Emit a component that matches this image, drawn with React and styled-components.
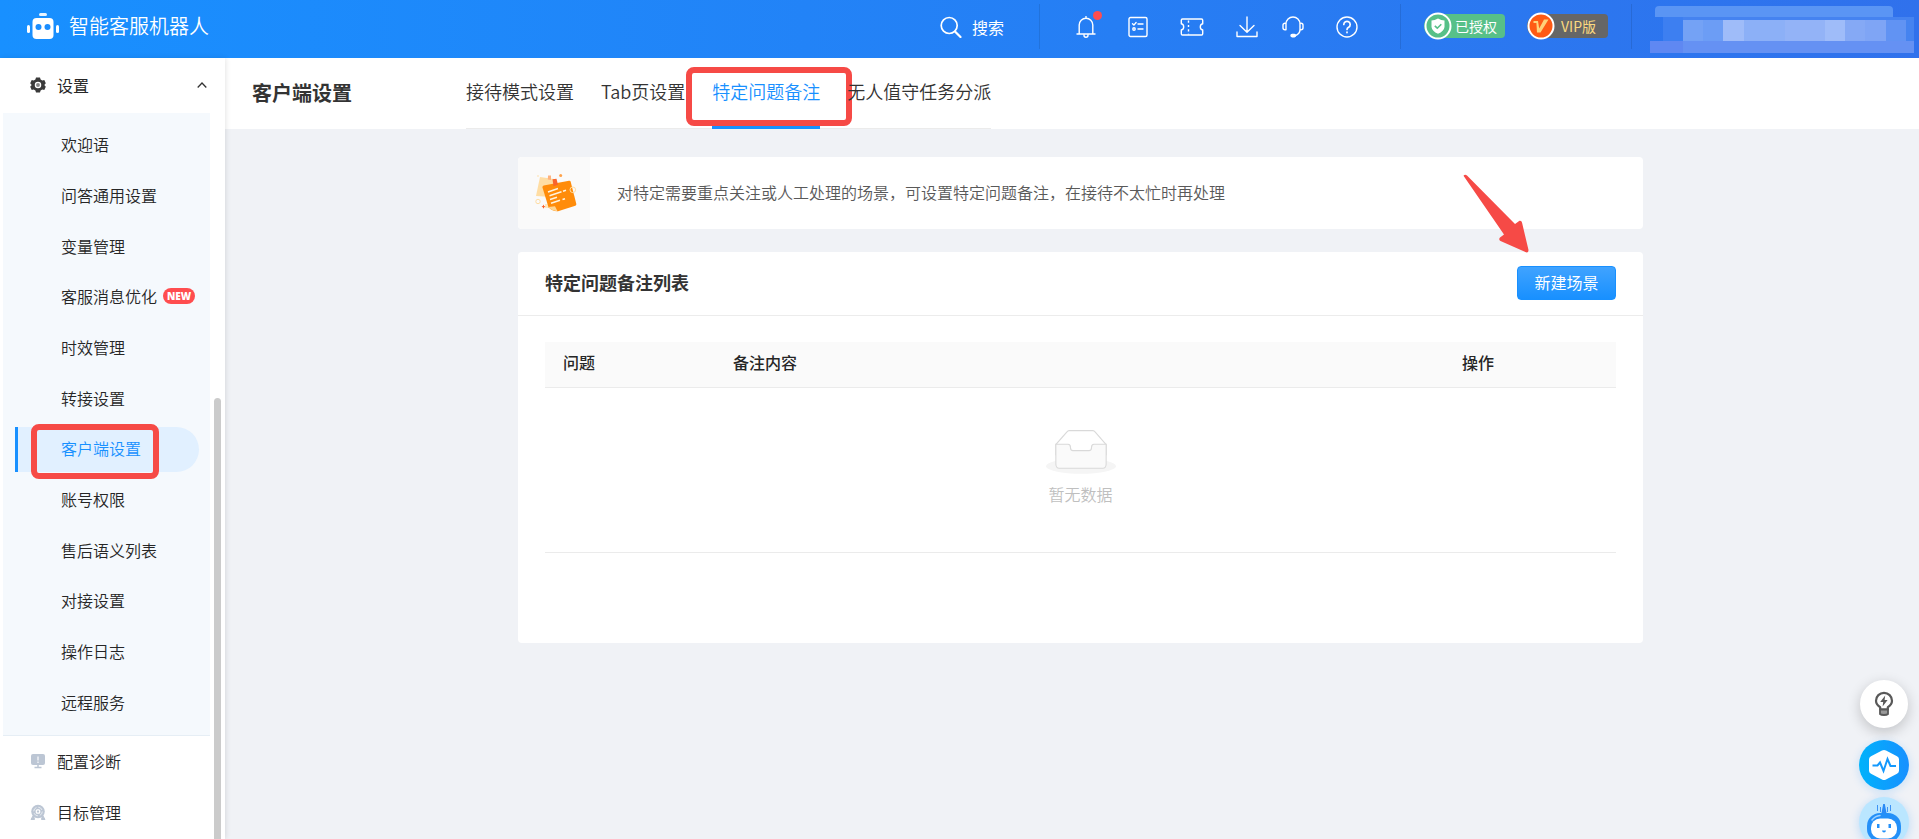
import React from 'react';
import styled, { createGlobalStyle } from 'styled-components';

const menu = [
    { label: '欢迎语' },
    { label: '问答通用设置' },
    { label: '变量管理' },
    { label: '客服消息优化', isNew: true },
    { label: '时效管理' },
    { label: '转接设置' },
    { label: '客户端设置', active: true },
    { label: '账号权限' },
    { label: '售后语义列表' },
    { label: '对接设置' },
    { label: '操作日志' },
    { label: '远程服务' },
];

const tabs = ['接待模式设置', 'Tab页设置', '特定问题备注', '无人值守任务分派'];

export default function App() {
    return (
        <PageStyle>
            <GlobalStyle />
            <Topbar />
            <BodyStyle>
                <Sidebar />
                <MainStyle>
                    <SubHeader>
                        <PageTitle>客户端设置</PageTitle>
                        <TabList>
                            {tabs.map((tab, i) => (
                                <Tab key={tab} href="#" $active={i === 2}>
                                    {tab}
                                    {i === 2 && <TabMark />}
                                </Tab>
                            ))}
                        </TabList>
                    </SubHeader>
                    <ContentStyle>
                        <Banner>
                            <BannerIcon><NoteIcon /></BannerIcon>
                            <BannerText>对特定需要重点关注或人工处理的场景，可设置特定问题备注，在接待不太忙时再处理</BannerText>
                        </Banner>
                        <Card>
                            <CardHeader>
                                <CardTitle>特定问题备注列表</CardTitle>
                                <CreateButton type="button">
                                    新建场景
                                    <Arrow viewBox="0 0 66 80" aria-hidden="true">
                                        <path d="M0.5 1.8Q2 -.2 4 1.6L52 50L56.500 46.700Q58.600 46.300 59 48.500L65.500 76Q65.600 78.800 63 78.300L37.500 67Q35.300 65.500 37 63.500L41 60.500Z" fill="#f64a46" />
                                    </Arrow>
                                </CreateButton>
                            </CardHeader>
                            <CardBody>
                                <Table>
                                    <thead>
                                        <tr>
                                            <Th $width="170px">问题</Th>
                                            <Th>备注内容</Th>
                                            <Th $width="172px">操作</Th>
                                        </tr>
                                    </thead>
                                    <tbody>
                                        <tr>
                                            <EmptyCell colSpan={3}>
                                                <EmptyIcon />
                                                <EmptyText>暂无数据</EmptyText>
                                            </EmptyCell>
                                        </tr>
                                    </tbody>
                                </Table>
                            </CardBody>
                        </Card>
                    </ContentStyle>
                </MainStyle>
            </BodyStyle>
            <FloatStyle>
                <FloatButton type="button" aria-label="建议" $size="48px" $bg="#fff" $shadow="0 4px 14px rgba(0, 0, 0, 0.2)">
                    <BulbIcon />
                </FloatButton>
                <FloatGroup>
                    <FloatButton type="button" aria-label="诊断" $size="50px" $bg="linear-gradient(90deg, #00b2fb, #1890ff)" $shadow="0 2px 10px rgba(24, 144, 255, 0.2)">
                        <PulseIcon />
                    </FloatButton>
                    <FloatButton type="button" aria-label="助手" $size="50px" $bg="#bae6ff" $shadow="0 2px 10px rgba(24, 144, 255, 0.25)">
                        <BotIcon />
                    </FloatButton>
                </FloatGroup>
            </FloatStyle>
        </PageStyle>
    );
}

function Topbar() {
    return (
        <TopbarStyle>
            <Brand href="#">
                <LogoIcon />
                智能客服机器人
            </Brand>
            <SearchButton type="button">
                <Svg width="22" height="22" viewBox="0 0 22 22" strokeWidth="1.700">
                    <circle cx="9.200" cy="9.500" r="8" />
                    <path d="M15 15.500L20.500 21" strokeWidth="2.200" />
                </Svg>
                搜索
            </SearchButton>
            <Divider />
            <IconRow>
                <IconButton type="button" aria-label="通知">
                    <Svg width="20" height="22" viewBox="0 0 20 22">
                        <path d="M1 18h18M3.200 18V9a6.800 6.800 0 0 1 13.600 0v9M10 2V.5M8 19.200a2 2 0 0 0 4 0" />
                    </Svg>
                    <Dot />
                </IconButton>
                <IconButton type="button" aria-label="清单">
                    <Svg width="20" height="22" viewBox="0 0 20 22">
                        <rect x="1" y="1.500" width="18" height="19" rx="1.500" />
                        <path d="M4.500 7.800l1.400 1.300 2.200-2.600M10 8h5M10 13h5" />
                        <circle cx="6" cy="13" r="1.200" />
                    </Svg>
                </IconButton>
                <IconButton type="button" aria-label="卡券">
                    <Svg width="24" height="22" viewBox="0 0 24 22">
                        <path d="M2.500 3h19a1.200 1.200 0 0 1 1.200 1.200v3.600a3.200 3.200 0 0 0 0 6.200v3.800a1.200 1.200 0 0 1-1.200 1.200h-19a1.200 1.200 0 0 1-1.200-1.200V14a3.200 3.200 0 0 0 0-6.200V4.200A1.200 1.200 0 0 1 2.500 3z" />
                        <path d="M8.500 4.500v14" strokeDasharray="2.200 2.200" strokeLinecap="butt" />
                    </Svg>
                </IconButton>
                <IconPair>
                    <IconButton type="button" aria-label="下载">
                        <Svg width="22" height="22" viewBox="0 0 22 22">
                            <path d="M11 1v15M4 9.500l7 6.800 7-6.800M1 16v4.500h20V16" />
                        </Svg>
                    </IconButton>
                    <IconButton type="button" aria-label="客服">
                        <Svg width="22" height="22" viewBox="0 0 22 22">
                            <path d="M4 13.500V8a7 7 0 0 1 14 0v5.500c0 3-1.500 4.800-4.500 6.200M4 7.200H3a2 2 0 0 0-2 2v2.600a2 2 0 0 0 2 2h1zM18 7.200h1a2 2 0 0 1 2 2v2.600a2 2 0 0 1-2 2h-1z" />
                            <rect x="9" y="18.500" width="4.500" height="2.200" rx="1.100" fill="#fff" />
                        </Svg>
                    </IconButton>
                </IconPair>
                <IconButton type="button" aria-label="帮助">
                    <Svg width="22" height="22" viewBox="0 0 22 22">
                        <circle cx="11" cy="11" r="10" />
                        <path d="M7.800 8.500a3.200 3.200 0 1 1 4.800 2.800c-1.100.6-1.600 1.100-1.600 2.200M11 16v.6" strokeWidth="1.700" />
                    </Svg>
                </IconButton>
            </IconRow>
            <Divider />
            <BadgeRow>
                <Badge $bg="#57c088" $color="#fff">
                    <svg width="28" height="28" viewBox="0 0 28 28">
                        <circle cx="14" cy="14" r="12.500" fill="#57c088" stroke="#fff" strokeWidth="2" />
                        <path d="M14 6.500q3.300 1.900 6.500 2v6.500q-.5 4.200-6.500 6.800q-6-2.600-6.500-6.800V8.500q3.200-.1 6.500-2z" fill="#fff" />
                        <path d="M10.800 13.800l2.500 2.400 4-4" fill="none" stroke="#57c088" strokeWidth="1.600" />
                    </svg>
                    已授权
                </Badge>
                <Badge $bg="#666" $color="#fbd97f">
                    <svg width="28" height="28" viewBox="0 0 28 28">
                        <circle cx="14" cy="14" r="12.500" fill="#ff5a14" stroke="#fff" strokeWidth="2" />
                        <path d="M6.500 9h4.500l1.200 7.500L17 7.500h4.500L13.500 20.500H10L9.400 11H6.500z" fill="#ffd27a" />
                    </svg>
                    <span>VIP版</span>
                </Badge>
            </BadgeRow>
            <Divider />
            <Mosaic width="264" height="47" viewBox="0 0 264 47">
                <path d="M5 11V4a4 4 0 0 1 4-4h230a4 4 0 0 1 4 4v7z" fill="#5a95f4" />
                <rect x="33" y="11" width="231" height="25" fill="#4583f0" />
                <rect x="0" y="35" width="264" height="12" fill="#6591f3" />
                <rect x="0" y="35" width="33" height="12" fill="#5f88f2" />
                <rect x="13" y="11" width="20" height="24" fill="#3d7ff1" />
                <rect x="33" y="14" width="20" height="21" fill="#74a2f5" />
                <rect x="53" y="14" width="20" height="21" fill="#6c9df5" />
                <rect x="73" y="14" width="21" height="21" fill="#9fbcf9" />
                <rect x="94" y="14" width="41" height="21" fill="#8cb0f7" />
                <rect x="135" y="14" width="40" height="21" fill="#93b3f7" />
                <rect x="175" y="14" width="20" height="21" fill="#9fbcf9" />
                <rect x="195" y="14" width="20" height="21" fill="#85a9f5" />
                <rect x="215" y="14" width="21" height="21" fill="#7fa5f5" />
                <rect x="236" y="14" width="20" height="21" fill="#6193f3" />
            </Mosaic>
        </TopbarStyle>
    );
}

function Sidebar() {
    return (
        <SidebarStyle>
            <GroupButton type="button">
                <svg width="16" height="16" viewBox="0 0 16 16">
                    <path d="M6 .5h4l.6 2 1.700 1 2-.6 1.500 3.300L14.300 8l1.500 1.800-1.500 3.300-2-.6-1.700 1-.6 2H6l-.6-2-1.700-1-2 .6L.2 9.800 1.700 8 .2 6.200 1.700 2.900l2 .6 1.700-1z" fill="#3a3a3a" />
                    <circle cx="8" cy="8" r="2.600" fill="#888" stroke="#fff" strokeWidth="1.300" />
                </svg>
                <GroupLabel>设置</GroupLabel>
                <svg width="10" height="6" viewBox="0 0 10 6">
                    <path d="M.7 5.500L5 1l4.300 4.500" fill="none" stroke="#333" strokeWidth="1.300" />
                </svg>
            </GroupButton>
            <SubMenu>
                {menu.map((item) => (
                    <SubMenuRow key={item.label}>
                        <MenuLink href="#" $active={item.active}>
                            {item.label}
                            {item.isNew && <NewBadge>NEW</NewBadge>}
                            {item.active && <MenuMark />}
                        </MenuLink>
                    </SubMenuRow>
                ))}
            </SubMenu>
            <RootLink href="#">
                <svg width="16" height="16" viewBox="0 0 16 16">
                    <rect x="1" y="1" width="14" height="11" rx="2" fill="#bcc6d4" />
                    <path d="M8 12v2.500M4.500 14.500h7" stroke="#bcc6d4" strokeWidth="1.500" />
                    <path d="M8 3.500v4M8 8.500v1.500" stroke="#eef1f5" strokeWidth="1.500" />
                </svg>
                配置诊断
            </RootLink>
            <RootLink href="#">
                <svg width="16" height="16" viewBox="0 0 16 16">
                    <path d="M3.500 11L1 15.500h3.500zM12.500 11l2.500 4.500h-3.500z" fill="#bcc6d4" stroke="#bcc6d4" />
                    <circle cx="8" cy="7.500" r="6.800" fill="#bcc6d4" />
                    <circle cx="8" cy="7.500" r="4.300" fill="none" stroke="#e8ecf1" strokeWidth="1" strokeDasharray="4.700 2" />
                    <rect x="6.300" y="5.800" width="3.400" height="3.400" rx="1" fill="none" stroke="#fff" strokeWidth="1.200" />
                </svg>
                目标管理
            </RootLink>
            <ScrollThumb />
        </SidebarStyle>
    );
}

function LogoIcon() {
    return (
        <svg width="32" height="26" viewBox="0 0 32 26" fill="#fff">
            <rect x="12" y="0" width="8" height="3" rx="1.500" opacity="0.9" />
            <rect x="5.500" y="5" width="21" height="21" rx="4" />
            <rect x="0" y="12" width="3" height="8" rx="1.500" />
            <rect x="29" y="12" width="3" height="8" rx="1.500" />
            <circle cx="11.500" cy="14" r="3" fill="#1a8dff" />
            <circle cx="20.500" cy="14" r="3" fill="#1a8dff" />
        </svg>
    );
}

function NoteIcon() {
    return (
        <svg width="60" height="60" viewBox="-1 3 60 60">
            <path d="M15 17l14 2-3 18-15-1z" fill="#ffdda3" />
            <path d="M23 15.500h3V20l-3.200-.5z" fill="#ffb27e" />
            <circle cx="13" cy="41.500" r="2.200" fill="none" stroke="#ffdda3" />
            <path d="M20 44h4v4h-4z" fill="#ffe7bd" />
            <path d="M17.500 27.500q-.3-1.600 1.200-2L44 20.700q1.300-.2 1.700 1L51.300 44q.3 1.300-1 1.800L33 51.200q-5.500.3-9.500-4z" fill="#ff8c0a" />
            <path d="M23.500 47l6.500-.8 2.500 5q-5.500-.2-9-4.200z" fill="#ffd592" />
            <path d="M27.500 19.300l4-.6 1.500 6-4.500 1.500z" fill="#f9642c" />
            <circle cx="35.700" cy="15.600" r="1.500" fill="#ffa24a" />
            <circle cx="13" cy="16" r="0.800" fill="#ffdda3" />
            <path d="M18.500 44.500l.7 1.500 1.300.6-1.300.7-.7 1.500-.7-1.500-1.300-.7 1.300-.6z" fill="#f9642c" />
            <path d="M23 32l10-3.500M24.500 35.700l12-4M38 31.300l3-1M25 39.500l7-2.300M26 43.300l9-3M37.500 39.500l2.500-.8" stroke="#fff3df" strokeWidth="1.500" />
            <circle cx="47.800" cy="29.800" r="2.800" fill="none" stroke="#ffdda3" />
        </svg>
    );
}

function EmptyIcon() {
    return (
        <svg width="70" height="46" viewBox="0 0 64 42">
            <ellipse cx="32" cy="33" rx="32" ry="7" fill="#f5f5f5" />
            <g stroke="#d9d9d9" fillRule="nonzero">
                <path d="M55 12.760L44.854 1.258C44.367.474 43.656 0 42.907 0H21.093c-.749 0-1.460.474-1.947 1.257L9 12.761V22h46v-9.240z" transform="translate(0 .5)" fill="#fff" />
                <path d="M41.613 15.931c0-1.605.994-2.930 2.227-2.931H55v18.137C55 33.260 53.680 35 52.050 35h-40.100C10.320 35 9 33.259 9 31.137V13h11.160c1.233 0 2.227 1.323 2.227 2.928v.022c0 1.605 1.005 2.901 2.237 2.901h14.752c1.232 0 2.237-1.308 2.237-2.913v-.007z" fill="#fafafa" />
            </g>
        </svg>
    );
}

function BulbIcon() {
    return (
        <svg width="20" height="26" viewBox="0 0 20 26">
            <path d="M6.200 18.500v-2.200C3.300 14.500 2 12.500 2 9.800a8 8 0 0 1 16 0c0 2.700-1.300 4.700-4.200 6.500v2.200z" fill="none" stroke="#595959" strokeWidth="2.200" strokeLinejoin="round" />
            <path d="M6 18.500h8v4.500q-1 1-4 1t-4-1z" fill="#999" stroke="#595959" strokeWidth="1.800" />
            <path d="M11.200 4.500L6.200 11h3l-.6 4.500 5-6.500h-3z" fill="#595959" />
        </svg>
    );
}

function PulseIcon() {
    return (
        <svg width="30" height="32" viewBox="0 0 30 32">
            <path d="M13 1.600q2-1.100 4 0l11 5.600q2 1.100 2 3v11.600q0 1.900-2 3l-11 5.600q-2 1.100-4 0l-11-5.600q-2-1.100-2-3V10.200q0-1.900 2-3z" fill="#fff" />
            <path d="M3.500 16.500h5l2.500-3 3.500 8.500 4-12 3 7h5.500" fill="none" stroke="#1499fd" strokeWidth="2" />
        </svg>
    );
}

function BotIcon() {
    return (
        <svg width="36" height="40" viewBox="0 0 36 40">
            <path d="M11.500 3v6M24.500 3v6M14.500 5v5M21.500 5v5" stroke="#3d93f5" strokeWidth="1" />
            <path d="M17.200 2h1.600l1.700 9h-5z" fill="#2a8af6" />
            <rect x="1" y="11" width="34" height="29" rx="13" fill="#2490f8" />
            <path d="M6 18q3-4 8-4.500" fill="none" stroke="#9fd2ff" strokeWidth="1.500" strokeLinecap="round" />
            <rect x="5" y="16.500" width="26" height="20" rx="9" fill="#fff" />
            <rect x="11" y="22" width="2.500" height="4" fill="#2490f8" />
            <rect x="22.500" y="22" width="2.500" height="4" fill="#2490f8" />
            <path d="M16 28.500h4q-.3 2-2 2t-2-2z" fill="#2490f8" />
        </svg>
    );
}

const GlobalStyle = createGlobalStyle`
    * {
        box-sizing: border-box;
    }

    body {
        margin: 0;
        font-family: 'Microsoft YaHei', 'Noto Sans CJK SC', sans-serif;
        font-size: 16px;
        font-weight: 350;
        color: #262626;
        background: #f0f2f6;
    }

    button {
        padding: 0;
        border: 0;
        background: none;
        font: inherit;
        color: inherit;
        cursor: pointer;
    }

    a {
        color: inherit;
        text-decoration: none;
    }

    svg {
        flex: none;
    }
`;

const PageStyle = styled.div`
    display: flex;
    flex-direction: column;
    height: 100vh;
    overflow: hidden;
`;

const TopbarStyle = styled.header`
    display: flex;
    align-items: center;
    flex: none;
    height: 58px;
    padding: 0 5px 0 27px;
    color: #fff;
    background: linear-gradient(90deg, #1890ff, #3071ec);
`;

const Brand = styled.a`
    display: flex;
    align-items: center;
    gap: 10px;
    margin-right: auto;
    padding-bottom: 7px;
    font-size: 20px;
    line-height: 26px;
`;

const SearchButton = styled.button`
    display: flex;
    align-items: center;
    gap: 10px;
    margin-right: 35px;
    padding-bottom: 5px;
    font-weight: 400;
    line-height: 20px;
`;

const Divider = styled.div`
    width: 1px;
    height: 45px;
    margin-bottom: 5px;
    background: rgba(0, 0, 0, 0.1);
`;

const IconRow = styled.div`
    display: flex;
    align-items: center;
    gap: 32px;
    padding: 0 42px 5px 36px;
`;

const IconPair = styled.div`
    display: flex;
    gap: 24px;
`;

const IconButton = styled.button`
    position: relative;
    display: flex;
`;

const Svg = styled.svg`
    fill: none;
    stroke: #fff;
    stroke-width: ${(props) => props.strokeWidth || 1.4};
    stroke-linecap: round;
    stroke-linejoin: round;
`;

const Dot = styled.span`
    position: absolute;
    top: -5px;
    right: -6px;
    width: 9px;
    height: 9px;
    border-radius: 50%;
    background: #ff4d4f;
`;

const BadgeRow = styled.div`
    display: flex;
    gap: 22px;
    padding: 0 23px 6px 23px;
`;

const Badge = styled.span`
    display: flex;
    align-items: center;
    gap: 3px;
    height: 24px;
    width: 81px;
    border-radius: 12px 4px 4px 12px;
    background: ${(props) => props.$bg};
    color: ${(props) => props.$color};
    font-size: 14px;
    font-weight: 400;
    line-height: 24px;

    span {
        margin-left: 3px;
    }
`;

const Mosaic = styled.svg`
    margin-left: 18px;
`;

const BodyStyle = styled.div`
    display: flex;
    flex: 1;
    min-height: 0;
`;

const SidebarStyle = styled.nav`
    position: relative;
    z-index: 1;
    display: flex;
    flex-direction: column;
    flex: none;
    width: 225px;
    padding: 0 15px 0 3px;
    overflow: hidden;
    background: #fff;
    box-shadow: 1px 0 5px rgba(0, 0, 0, 0.1);
`;

const GroupButton = styled.button`
    display: flex;
    align-items: center;
    flex: none;
    gap: 11px;
    height: 55px;
    padding: 0 3px 2px 27px;
    font-weight: 400;
`;

const GroupLabel = styled.span`
    flex: 1;
    text-align: left;
`;

const SubMenu = styled.ul`
    display: grid;
    grid-auto-rows: 1fr;
    flex: none;
    height: 623px;
    margin: 0;
    padding: 7px 11px 7px 12px;
    border-bottom: 1px solid #e6eef5;
    background: #f5f9fd;
    list-style: none;
`;

const SubMenuRow = styled.li`
    display: flex;
    align-items: center;
`;

const MenuLink = styled.a`
    position: relative;
    display: flex;
    align-items: center;
    flex: 1;
    gap: 6px;
    height: 45px;
    padding: 0 0 2px 43px;
    border-left: 3px solid ${(props) => (props.$active ? '#1890ff' : 'transparent')};
    border-radius: 0 23px 23px 0;
    background: ${(props) => (props.$active ? '#e1f0ff' : 'transparent')};
    color: ${(props) => (props.$active ? '#1890ff' : '#262626')};
    white-space: nowrap;
`;

const NewBadge = styled.span`
    width: 32px;
    height: 16px;
    border-radius: 8px;
    background: #ff4d4f;
    color: #fff;
    font-family: 'Open Sans', sans-serif;
    font-size: 10px;
    font-weight: 800;
    line-height: 16px;
    text-align: center;
`;

const RedFrame = styled.span`
    position: absolute;
    border: 6px solid #f64a46;
    border-radius: 8px;
    pointer-events: none;
`;

const MenuMark = styled(RedFrame)`
    top: -3px;
    left: 13px;
    width: 128px;
    height: 55px;
`;

const RootLink = styled.a`
    display: flex;
    align-items: center;
    flex: none;
    gap: 11px;
    height: 51px;
    padding: 0 0 2px 27px;
`;

const ScrollThumb = styled.div`
    position: absolute;
    top: 340px;
    right: 4px;
    bottom: -8px;
    width: 7px;
    border-radius: 4px;
    background: #cbcbcb;
`;

const MainStyle = styled.main`
    display: flex;
    flex-direction: column;
    flex: 1;
    min-width: 0;
`;

const SubHeader = styled.div`
    display: flex;
    align-items: center;
    flex: none;
    gap: 114px;
    height: 71px;
    padding-left: 27px;
    background: #fff;
`;

const PageTitle = styled.h1`
    margin: 0;
    padding-bottom: 2px;
    font-size: 20px;
    font-weight: 700;
    color: #333;
`;

const TabList = styled.nav`
    display: flex;
    gap: 27px;
    border-bottom: 1px solid #ebebeb;
`;

const Tab = styled.a`
    position: relative;
    margin-bottom: -1px;
    padding-bottom: 2px;
    border-bottom: 3px solid ${(props) => (props.$active ? '#1890ff' : 'transparent')};
    color: ${(props) => (props.$active ? '#1890ff' : '#333')};
    font-size: 18px;
    line-height: 66px;
`;

const TabMark = styled(RedFrame)`
    top: 9px;
    right: -32px;
    left: -26px;
    height: 59px;
`;

const ContentStyle = styled.div`
    display: flex;
    flex-direction: column;
    align-items: center;
    gap: 23px;
    padding: 28px 0 28px 17px;
`;

const Banner = styled.section`
    display: flex;
    align-items: center;
    width: 100%;
    max-width: 1125px;
    border-radius: 4px;
    background: #fff;
    overflow: hidden;
`;

const BannerIcon = styled.div`
    display: flex;
    justify-content: center;
    align-items: center;
    width: 72px;
    height: 72px;
    background: #fafafa;
`;

const BannerText = styled.p`
    margin: 0 27px;
    padding-bottom: 2px;
    color: #595959;
`;

const Card = styled.section`
    width: 100%;
    max-width: 1125px;
    border-radius: 4px;
    background: #fff;
`;

const CardHeader = styled.div`
    display: flex;
    justify-content: space-between;
    align-items: center;
    height: 64px;
    padding: 0 27px 2px;
    border-bottom: 1px solid #ececec;
`;

const CardTitle = styled.h2`
    margin: 0;
    padding-bottom: 2px;
    font-size: 18px;
    font-weight: 700;
    color: #333;
`;

const CreateButton = styled.button`
    position: relative;
    width: 99px;
    height: 34px;
    padding-bottom: 2px;
    border: 1px solid #1890ff;
    border-radius: 4px;
    background: linear-gradient(180deg, #40a3ff, #1890ff);
    color: #fff;
    font-weight: 400;
    line-height: 30px;
`;

const Arrow = styled.svg`
    position: absolute;
    top: -93px;
    left: -55px;
    width: 66px;
    height: 80px;
    pointer-events: none;
`;

const CardBody = styled.div`
    padding: 26px 27px 90px;
`;

const Table = styled.table`
    width: 100%;
    border-collapse: separate;
    border-spacing: 0;
    table-layout: fixed;
`;

const Th = styled.th`
    width: ${(props) => props.$width || 'auto'};
    height: 46px;
    padding: 0 18px 5px;
    border-bottom: 1px solid #ebebeb;
    background: #fafafa;
    font-weight: 500;
    text-align: left;
`;

const EmptyCell = styled.td`
    height: 165px;
    padding: 42px 0 0;
    border-bottom: 1px solid #ebebeb;
    text-align: center;
    vertical-align: top;
`;

const EmptyText = styled.div`
    margin-top: 1px;
    color: #bfbfbf;
    line-height: 24px;
`;

const FloatStyle = styled.div`
    position: fixed;
    right: 10px;
    bottom: -8px;
    z-index: 2;
    display: flex;
    flex-direction: column;
    align-items: center;
    gap: 12px;
`;

const FloatGroup = styled.div`
    display: flex;
    flex-direction: column;
    gap: 7px;
`;

const FloatButton = styled.button`
    display: flex;
    justify-content: center;
    align-items: center;
    width: ${(props) => props.$size};
    height: ${(props) => props.$size};
    border-radius: 50%;
    background: ${(props) => props.$bg};
    box-shadow: ${(props) => props.$shadow};
`;
